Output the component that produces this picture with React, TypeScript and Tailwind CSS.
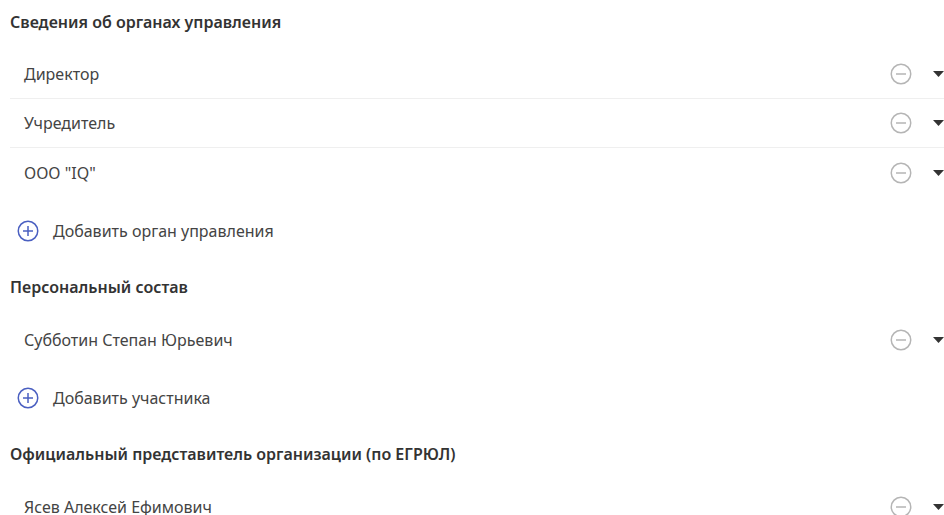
import React from 'react';

interface Section {
  title: string;
  items: string[];
  addLabel?: string;
}

const sections: Section[] = [
  {
    title: 'Сведения об органах управления',
    items: ['Директор', 'Учредитель', 'ООО "IQ"'],
    addLabel: 'Добавить орган управления',
  },
  {
    title: 'Персональный состав',
    items: ['Субботин Степан Юрьевич'],
    addLabel: 'Добавить участника',
  },
  {
    title: 'Официальный представитель организации (по ЕГРЮЛ)',
    items: ['Ясев Алексей Ефимович'],
  },
];

const MinusCircle = () => (
  <svg width="22" height="22" viewBox="0 0 22 22" fill="none">
    <circle cx="11" cy="11" r="9.75" stroke="#b5b5b5" strokeWidth="1.5" />
    <line x1="6" y1="11" x2="16" y2="11" stroke="#b5b5b5" strokeWidth="1.5" />
  </svg>
);

const PlusCircle = () => (
  <svg width="22" height="22" viewBox="0 0 22 22" fill="none">
    <circle cx="11" cy="11" r="9.75" stroke="#4a5fc1" strokeWidth="1.5" />
    <line x1="6" y1="11" x2="16" y2="11" stroke="#4a5fc1" strokeWidth="1.5" />
    <line x1="11" y1="6" x2="11" y2="16" stroke="#4a5fc1" strokeWidth="1.5" />
  </svg>
);

const Caret = () => (
  <svg width="11" height="6" viewBox="0 0 11 6">
    <path d="M0 0h11L5.5 6z" fill="#333" />
  </svg>
);

const Row: React.FC<{ label: string }> = ({ label }) => (
  <div className="h-[49px] flex items-center pl-[14px]">
    <span className="flex-1 text-[16px] text-[#444]">{label}</span>
    <div className="flex items-center gap-[21px]">
      <MinusCircle />
      <Caret />
    </div>
  </div>
);

export default function App() {
  return (
    <div
      className="bg-white min-h-screen pl-[10px] pt-[10px] overflow-hidden"
      style={{ fontFamily: '"Noto Sans", "Open Sans", sans-serif' }}
    >
      {sections.map((s, i) => (
        <div key={s.title} className={i > 0 ? 'mt-[24px]' : ''}>
          <h2 className="h-[24px] leading-[24px] text-[16px] font-semibold text-[#333]">
            {s.title}
          </h2>
          <div className="mt-[16px] divide-y divide-[#efefef]">
            {s.items.map((item) => (
              <Row key={item} label={item} />
            ))}
          </div>
          {s.addLabel && (
            <button className="mt-[14px] h-[40px] flex items-center gap-[14px] pl-[7px] text-[16px] text-[#444]">
              <PlusCircle />
              <span>{s.addLabel}</span>
            </button>
          )}
        </div>
      ))}
    </div>
  );
}
